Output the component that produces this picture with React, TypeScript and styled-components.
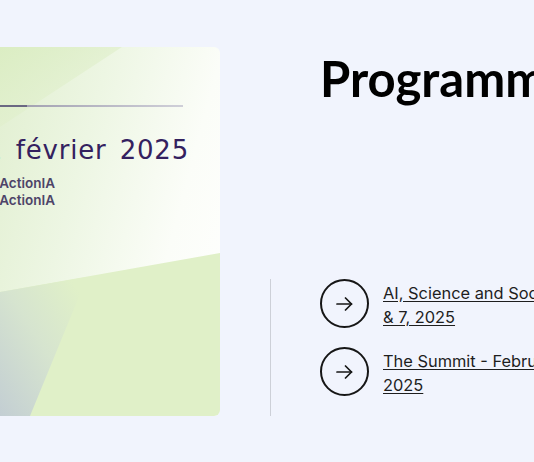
import React from "react";
import styled, { createGlobalStyle } from "styled-components";

const GlobalStyle = createGlobalStyle`
    html, body {
        margin: 0;
        padding: 0;
        background: #f1f4fd;
        overflow: hidden;
    }
    body {
        font-family: Inter, "Liberation Sans", sans-serif;
    }
`

const Section = styled.section`
    display: flex;
    gap: 50px;
    padding-top: 47px;
    width: 1000px;
`

const Poster = styled.div`
    position: relative;
    flex-shrink: 0;
    width: 220px;
    height: 369px;
    overflow: hidden;
    border-radius: 0 6px 6px 0;
    background: linear-gradient(105deg, #e1efd0 0%, #edf6e3 35%, #fbfdf8 70%, #ffffff 100%);
`

const Artwork = styled.svg`
    position: absolute;
    inset: 0;
    width: 100%;
    height: 100%;
`

const PosterBody = styled.div`
    position: relative;
    padding-top: 58px;
`

const Rule = styled.div`
    width: 183px;
    height: 2px;
    background: linear-gradient(90deg, #6a6882 0 27px, #a4a3b3 27px, #cfcfd8 100%);
`

const DateLine = styled.div`
    display: flex;
    justify-content: flex-end;
    width: 189px;
    margin-top: 26px;
    font-family: "DejaVu Sans", sans-serif;
    font-size: 26px;
    letter-spacing: 0.8px;
    word-spacing: 4px;
    line-height: 34px;
    color: #34215f;
    white-space: nowrap;
`

const Handle = styled.div`
    display: flex;
    justify-content: flex-end;
    width: 55px;
    font-size: 13.5px;
    font-weight: 600;
    line-height: 17px;
    color: #4d4468;
    white-space: nowrap;
`

const Handles = styled.div`
    margin-top: 8px;
`

const Side = styled.div`
    display: flex;
    flex-direction: column;
    justify-content: space-between;
    height: 369px;
`

const Title = styled.h2`
    margin: 0 0 0 50px;
    font-family: Lato, sans-serif;
    font-size: 49px;
    font-weight: 700;
    line-height: 62px;
    color: #000;
    white-space: nowrap;
`

const LinkList = styled.ul`
    list-style: none;
    margin: 0;
    padding: 0 0 19px 49px;
    border-left: 1px solid #cdd0d8;
    display: flex;
    flex-direction: column;
    gap: 18px;
`

const LinkItem = styled.li`
    display: flex;
    align-items: flex-start;
    gap: 14px;
`

const ArrowCircle = styled.span`
    box-sizing: border-box;
    flex-shrink: 0;
    width: 49px;
    height: 49px;
    border: 2px solid #161616;
    border-radius: 50%;
    display: flex;
    align-items: center;
    justify-content: center;
`

const LinkText = styled.a`
    margin-top: 2px;
    font-size: 16.4px;
    line-height: 24px;
    color: #1e1e1e;
    text-decoration: underline;
    text-underline-offset: 2px;
    white-space: nowrap;
`

const Arrow = () => (
    <svg width="17" height="14" viewBox="0 0 17 14" fill="none" stroke="#161616" strokeWidth="1.7" strokeLinecap="round" strokeLinejoin="round">
        <path d="M1 7h14.5" />
        <path d="M9.5 1l6 6-6 6" />
    </svg>
)

const links = [
    ["AI, Science and Society - February 6", "& 7, 2025"],
    ["The Summit - February 10 & 11,", "2025"],
]

export default function App() {
    return (
        <>
            <GlobalStyle />
            <Section>
                <Poster>
                    <Artwork viewBox="0 0 220 369" preserveAspectRatio="none">
                        <defs>
                            <linearGradient id="corner" x1="0" y1="0" x2="1" y2="1">
                                <stop offset="0" stopColor="#dbedc3" />
                                <stop offset="1" stopColor="#e6f2d6" stopOpacity="0.4" />
                            </linearGradient>
                            <linearGradient id="slate" x1="0" y1="1" x2="0.9" y2="0.1">
                                <stop offset="0" stopColor="#c3ced3" />
                                <stop offset="0.55" stopColor="#d6e4cf" />
                                <stop offset="1" stopColor="#e0f0c8" />
                            </linearGradient>
                        </defs>
                        <polygon points="0,0 122,0 0,80" fill="url(#corner)" />
                        <polygon points="0,245 220,206 220,369 0,369" fill="#e0f0c8" />
                        <polygon points="0,245 87,230 30,369 0,369" fill="url(#slate)" />
                    </Artwork>
                    <PosterBody>
                        <Rule />
                        <DateLine><span>Du 6 au 11 février 2025</span></DateLine>
                        <Handles>
                            <Handle><span>#SommetActionIA</span></Handle>
                            <Handle><span>@SommetActionIA</span></Handle>
                        </Handles>
                    </PosterBody>
                </Poster>
                <Side>
                    <Title>Programme</Title>
                    <LinkList>
                        {links.map(([first, second]) => (
                            <LinkItem key={first}>
                                <ArrowCircle><Arrow /></ArrowCircle>
                                <LinkText href="#">{first}<br />{second}</LinkText>
                            </LinkItem>
                        ))}
                    </LinkList>
                </Side>
            </Section>
        </>
    )
}
